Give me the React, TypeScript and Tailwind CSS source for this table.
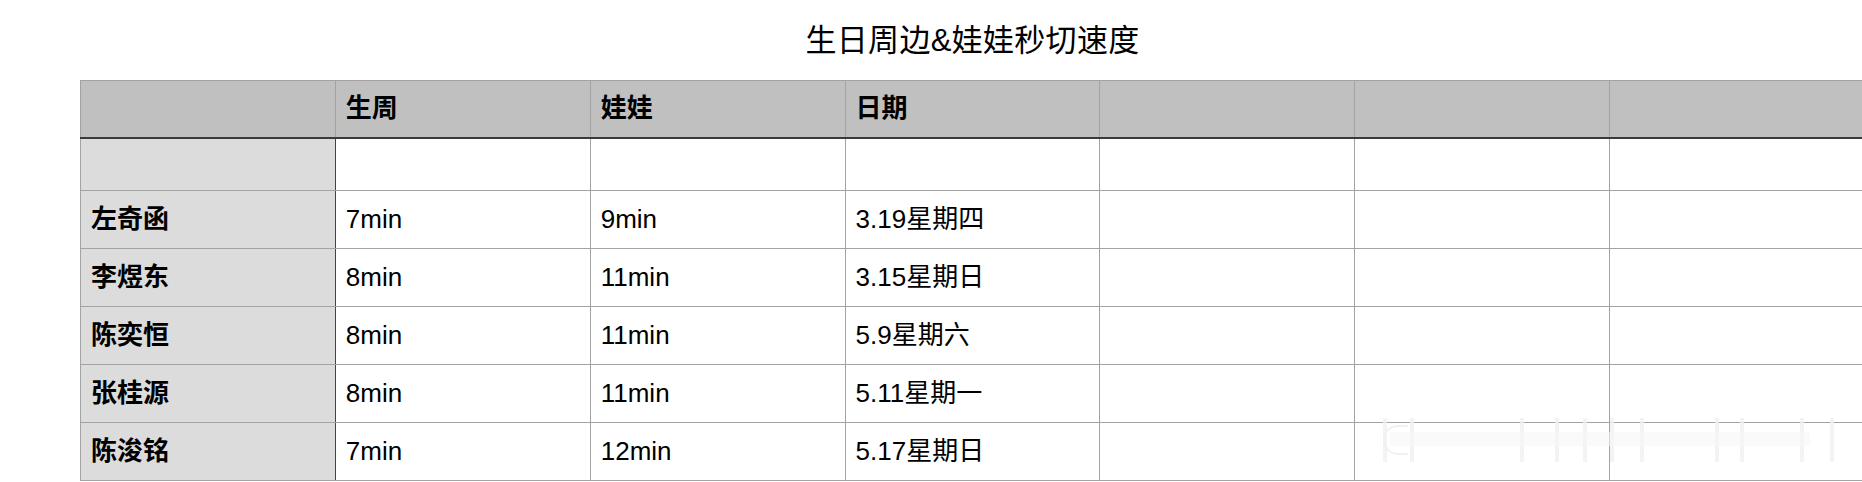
const rows = [
  { name: "左奇函", a: "7min", b: "9min", date: "3.19星期四" },
  { name: "李煜东", a: "8min", b: "11min", date: "3.15星期日" },
  { name: "陈奕恒", a: "8min", b: "11min", date: "5.9星期六" },
  { name: "张桂源", a: "8min", b: "11min", date: "5.11星期一" },
  { name: "陈浚铭", a: "7min", b: "12min", date: "5.17星期日" },
];

const headers = ["", "生周", "娃娃", "日期", "", "", ""];

const font = "font-['Liberation_Sans','Noto_Sans_CJK_SC',sans-serif]";

// faint blurred watermark strokes in the lower right corner
const marks = [1383, 1410, 1520, 1555, 1583, 1610, 1640, 1715, 1740, 1800, 1830];

export default function App() {
  return (
    <div className={`relative h-[482px] w-[1862px] overflow-hidden bg-white ${font} text-black`}>
      <div className="ml-[80px] w-[1785px]">
        <div className="flex h-[80px] items-start justify-center pt-[21px] text-[31px] leading-[40px] tracking-[0.3px]">
          生日周边&amp;娃娃秒切速度
        </div>
        <table className="table-fixed border-collapse text-[26px]">
          <colgroup>
            {headers.map((_, i) => (
              <col key={i} className="w-[255px]" />
            ))}
          </colgroup>
          <thead>
            <tr className="h-[57px] bg-[#bfc0bf]">
              {headers.map((h, i) => (
                <th
                  key={i}
                  className="border border-[#a3a3a3] border-b-2 border-b-[#3a3a3a] px-[10px] text-left align-middle font-bold"
                >
                  {h}
                </th>
              ))}
            </tr>
          </thead>
          <tbody>
            <tr className="h-[53px]">
              <td className="border border-[#a3a3a3] border-r-[#444] bg-[#dcdcdc]" />
              {[0, 1, 2, 3, 4, 5].map((i) => (
                <td key={i} className="border border-[#a3a3a3]" />
              ))}
            </tr>
            {rows.map((r) => (
              <tr key={r.name} className="h-[58px]">
                <td className="border border-[#a3a3a3] border-r-[#444] bg-[#dcdcdc] px-[10px] font-bold">
                  {r.name}
                </td>
                <td className="border border-[#a3a3a3] px-[10px]">{r.a}</td>
                <td className="border border-[#a3a3a3] px-[10px]">{r.b}</td>
                <td className="border border-[#a3a3a3] px-[10px]">{r.date}</td>
                <td className="border border-[#a3a3a3]" />
                <td className="border border-[#a3a3a3]" />
                <td className="border border-[#a3a3a3]" />
              </tr>
            ))}
          </tbody>
        </table>
      </div>
      <div className="pointer-events-none absolute left-[1383px] top-[425px] h-[30px] w-[25px] rounded-l-full border-2 border-r-0 border-[#ececec] opacity-70" />
      {marks.map((x) => (
        <div
          key={x}
          className="pointer-events-none absolute top-[418px] h-[44px] w-[4px] bg-[#f0f0f0] opacity-80"
          style={{ left: x }}
        />
      ))}
      <div className="pointer-events-none absolute left-[1390px] top-[432px] h-[14px] w-[420px] bg-[#f6f6f6] opacity-60" />
    </div>
  );
}
